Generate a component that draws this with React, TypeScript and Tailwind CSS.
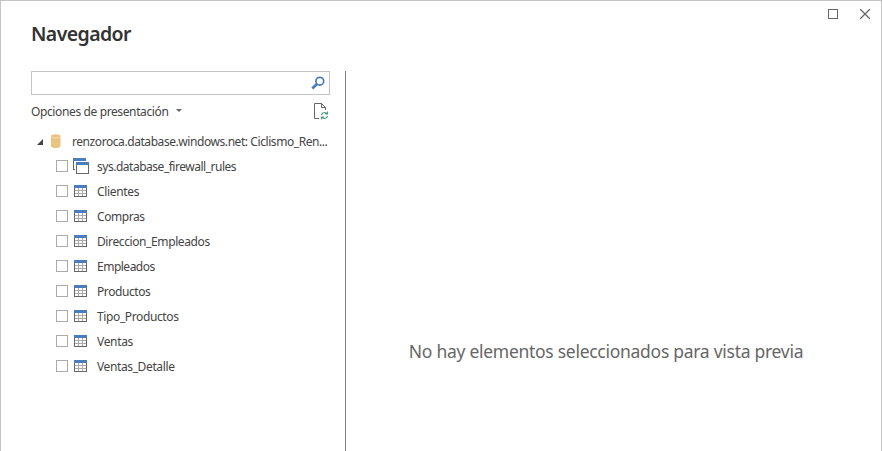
import React from "react";

const tables = [
  { name: "Clientes", fit: "tracking-[-0.33px]" },
  { name: "Compras", fit: "tracking-[-0.43px]" },
  { name: "Direccion_Empleados", fit: "tracking-[-0.39px]" },
  { name: "Empleados", fit: "tracking-[-0.5px]" },
  { name: "Productos", fit: "tracking-[-0.42px]" },
  { name: "Tipo_Productos", fit: "tracking-[-0.38px]" },
  { name: "Ventas", fit: "tracking-[-0.33px]" },
  { name: "Ventas_Detalle", fit: "tracking-[-0.38px]" },
];

function TableIcon() {
  return (
    <svg width="16" height="16" className="shrink-0" shapeRendering="crispEdges">
      <rect x="1" y="2" width="13" height="12" fill="#666" />
      <rect x="2" y="5" width="11" height="8" fill="#fff" />
      <path d="M5.5 5v8M9.5 5v8M2 7.5h11M2 10.5h11" stroke="#aaa" />
      <rect x="1" y="2" width="13" height="3" fill="#4a7ebb" />
    </svg>
  );
}

function ViewIcon() {
  return (
    <svg width="16" height="16" className="shrink-0" shapeRendering="crispEdges">
      <path d="M0.5 0v11.5H3" fill="none" stroke="#666" />
      <rect width="13" height="3" fill="#4a7ebb" />
      <rect x="2" y="3" width="14" height="13" fill="#fff" />
      <rect x="3.5" y="4.5" width="12" height="11" fill="#fff" stroke="#666" />
      <rect x="3" y="4" width="13" height="3" fill="#4a7ebb" />
    </svg>
  );
}

function TreeRow({ name, fit, view }: { name: string; fit: string; view?: boolean }) {
  return (
    <div className="flex h-[25px] items-center pl-[25px]">
      <span className="mt-1.5 h-3 w-3 shrink-0 self-start border border-[#ababab] bg-white" />
      <span className="ml-[5px] mt-1 flex w-4 shrink-0 self-start">{view ? <ViewIcon /> : <TableIcon />}</span>
      <span className={`ml-2 whitespace-nowrap ${fit}`}>{name}</span>
    </div>
  );
}

export default function App() {
  return (
    <div className="flex h-[451px] w-[882px] flex-col overflow-hidden border-x border-t border-[#c3c3c3] bg-white font-['Noto_Sans',sans-serif] text-xs leading-4 text-[#444]">
      <header className="flex h-[70px] shrink-0 justify-between pl-[30px]">
        <h1 className="pt-[19px] text-[19.5px] font-semibold leading-7 tracking-[-0.6px] text-[#333]">Navegador</h1>
        <div className="flex gap-[22px] pr-[11px] pt-2 text-[#666]">
          <svg width="10" height="10" shapeRendering="crispEdges">
            <rect x="0.5" y="0.5" width="9" height="9" fill="none" stroke="currentColor" />
          </svg>
          <svg width="10" height="10">
            <path d="M0 0L10 10M10 0L0 10" stroke="currentColor" strokeWidth="1.3" />
          </svg>
        </div>
      </header>
      <main className="flex min-h-0 flex-1">
        <aside className="w-[345px] shrink-0 border-r border-[#808080] pl-[30px]">
          <div className="flex h-6 w-[299px] items-center justify-end border border-[#c3c3c3] pr-1">
            <svg width="14" height="14" fill="none">
              <circle cx="8.8" cy="5.2" r="3.9" stroke="#4a7ebb" strokeWidth="1.7" />
              <path d="M6 8L1.3 12.5" stroke="#4a7ebb" strokeWidth="2.6" />
            </svg>
          </div>
          <div className="flex h-[34px] w-[299px] items-center">
            <span className="whitespace-nowrap tracking-[-0.38px]">Opciones de presentación</span>
            <svg width="6" height="4" className="mb-[3px] ml-2">
              <path d="M0 0h6L3 3z" fill="#666" />
            </svg>
            <svg width="16" height="18" className="mb-0.5 ml-auto mr-px" fill="none">
              <path d="M6 16.5H1.500V1.500H8.500L12.500 5.500V8M8.500 1.500V5.500H12.500" stroke="#666" />
              <path d="M8.500 13Q9 10.500 12 10.500L14 11.500M14.500 9.500V12H12M14.500 14Q14 16.500 11 16.500L9 15.500M8.500 17.500V15H11" stroke="#4b9b7b" strokeWidth="1.2" />
            </svg>
          </div>
          <div className="flex h-[25px] items-center">
            <svg width="6" height="6" className="ml-1.5">
              <path d="M6 0v6H0z" fill="#444" />
            </svg>
            <svg width="10" height="14" className="mb-px ml-2">
              <path d="M0 2v10c0 2.700 9.500 2.700 9.500 0V2z" fill="#eac282" />
              <ellipse cx="4.750" cy="2" rx="4.750" ry="1.800" fill="#eac282" />
              <path d="M0 2.200c0 2.300 9.500 2.300 9.500 0" fill="none" stroke="#f5dfba" strokeWidth="0.800" />
            </svg>
            <span className="ml-[11px] whitespace-nowrap tracking-[-0.43px]">renzoroca.database.windows.net: Ciclismo_Ren...</span>
          </div>
          <TreeRow name="sys.database_firewall_rules" fit="tracking-[-0.48px]" view />
          {tables.map((t) => (
            <TreeRow key={t.name} {...t} />
          ))}
        </aside>
        <section className="flex flex-1 justify-center pr-[15px] pt-[268px] text-[17.5px] leading-6 text-[#666]">
          <p className="whitespace-nowrap tracking-[-0.28px]">No hay elementos seleccionados para vista previa</p>
        </section>
      </main>
    </div>
  );
}
